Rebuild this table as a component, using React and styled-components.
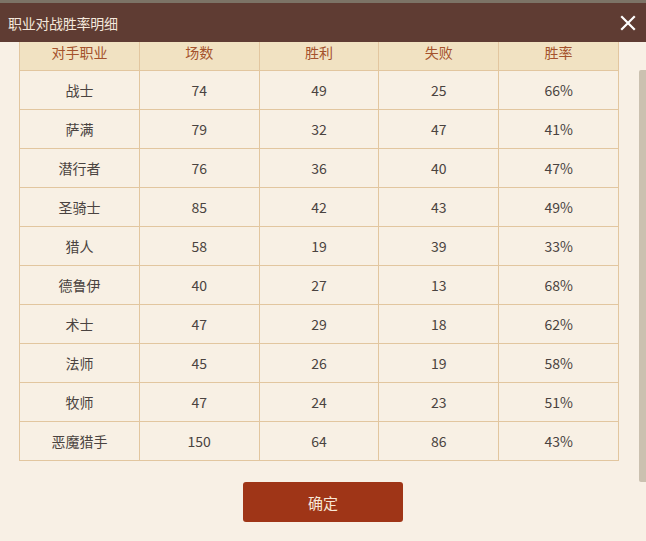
import React from "react";
import styled, { createGlobalStyle } from "styled-components";

const Global = createGlobalStyle`
  html, body { margin: 0; padding: 0; background: #f8f0e5; }
  body { font-family: "Microsoft YaHei", "Noto Sans CJK SC", "Noto Sans", sans-serif; }
`;

const Page = styled.div`
  width: 646px;
  height: 541px;
  overflow: hidden;
  background: #f8f0e5;
  display: flex;
  flex-direction: column;
`;

const BackStrip = styled.div`
  height: 3px;
  background: #7c7366;
`;

const TitleBar = styled.div`
  height: 39px;
  background: #5f3c33;
  display: flex;
  align-items: center;
  justify-content: space-between;
  padding: 0 10px 0 8px;
`;

const Title = styled.div`
  color: #f4e8dc;
  font-size: 14px;
  letter-spacing: -0.3px;
`;

const Close = styled.button`
  border: 0;
  background: transparent;
  padding: 0;
  width: 16px;
  height: 16px;
  display: flex;
  cursor: pointer;
`;

const Body = styled.div`
  flex: 1;
  display: flex;
`;

const Main = styled.div`
  flex: 1;
  padding: 0 20px 0 19px;
  display: flex;
  flex-direction: column;
  align-items: center;
`;

const Table = styled.table`
  width: 600px;
  border-collapse: collapse;
  table-layout: fixed;
  background: #f8f0e4;
`;

const HeadCell = styled.th`
  height: 28px;
  padding: 0 0 8px;
  line-height: 20px;
  font-weight: normal;
  font-size: 14px;
  color: #a4522c;
  background: #f1e2c2;
  border: 1px solid #e2c69f;
  border-top: 0;
  box-sizing: border-box;
`;

const Cell = styled.td`
  height: 39px;
  padding: 0;
  text-align: center;
  font-size: 14px;
  color: #4a4340;
  border: 1px solid #e2c69f;
  box-sizing: border-box;
`;

const Confirm = styled.button`
  margin: 21px 0 0 8px;
  width: 160px;
  height: 40px;
  border: 0;
  border-radius: 3px;
  background: #9f3517;
  color: #f7e8d8;
  font-family: inherit;
  font-size: 15px;
  cursor: pointer;
`;

const Track = styled.div`
  width: 7px;
  display: flex;
  flex-direction: column;
`;

const Thumb = styled.div`
  margin-top: 28px;
  height: 412px;
  background: #cbc1b0;
  border-radius: 2px 0 0 2px;
`;

const rows = [
  ["战士", 74, 49, 25, "66%"],
  ["萨满", 79, 32, 47, "41%"],
  ["潜行者", 76, 36, 40, "47%"],
  ["圣骑士", 85, 42, 43, "49%"],
  ["猎人", 58, 19, 39, "33%"],
  ["德鲁伊", 40, 27, 13, "68%"],
  ["术士", 47, 29, 18, "62%"],
  ["法师", 45, 26, 19, "58%"],
  ["牧师", 47, 24, 23, "51%"],
  ["恶魔猎手", 150, 64, 86, "43%"],
];

const heads = ["对手职业", "场数", "胜利", "失败", "胜率"];

export default function App() {
  return (
    <Page>
      <Global />
      <BackStrip />
      <TitleBar>
        <Title>职业对战胜率明细</Title>
        <Close aria-label="关闭">
          <svg width="16" height="16" viewBox="0 0 16 16">
            <path d="M2 2 L14 14 M14 2 L2 14" stroke="#ffffff" strokeWidth="2.2" strokeLinecap="square" />
          </svg>
        </Close>
      </TitleBar>
      <Body>
        <Main>
          <Table>
            <thead>
              <tr>
                {heads.map((h) => (
                  <HeadCell key={h}>{h}</HeadCell>
                ))}
              </tr>
            </thead>
            <tbody>
              {rows.map((r) => (
                <tr key={r[0]}>
                  {r.map((v, i) => (
                    <Cell key={i}>{v}</Cell>
                  ))}
                </tr>
              ))}
            </tbody>
          </Table>
          <Confirm>确定</Confirm>
        </Main>
        <Track>
          <Thumb />
        </Track>
      </Body>
    </Page>
  );
}
